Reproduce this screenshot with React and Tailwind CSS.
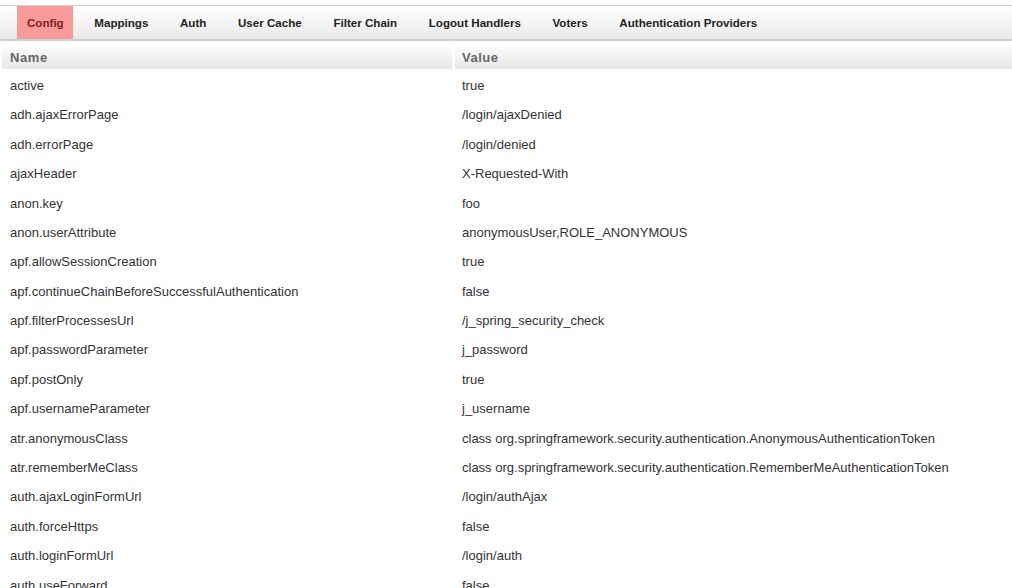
const tabs = [
  'Config',
  'Mappings',
  'Auth',
  'User Cache',
  'Filter Chain',
  'Logout Handlers',
  'Voters',
  'Authentication Providers',
];

const rows = [
  ['active', 'true'],
  ['adh.ajaxErrorPage', '/login/ajaxDenied'],
  ['adh.errorPage', '/login/denied'],
  ['ajaxHeader', 'X-Requested-With'],
  ['anon.key', 'foo'],
  ['anon.userAttribute', 'anonymousUser,ROLE_ANONYMOUS'],
  ['apf.allowSessionCreation', 'true'],
  ['apf.continueChainBeforeSuccessfulAuthentication', 'false'],
  ['apf.filterProcessesUrl', '/j_spring_security_check'],
  ['apf.passwordParameter', 'j_password'],
  ['apf.postOnly', 'true'],
  ['apf.usernameParameter', 'j_username'],
  ['atr.anonymousClass', 'class org.springframework.security.authentication.AnonymousAuthenticationToken'],
  ['atr.rememberMeClass', 'class org.springframework.security.authentication.RememberMeAuthenticationToken'],
  ['auth.ajaxLoginFormUrl', '/login/authAjax'],
  ['auth.forceHttps', 'false'],
  ['auth.loginFormUrl', '/login/auth'],
  ['auth.useForward', 'false'],
  ['dao.hideUserNotFoundExceptions', 'true'],
];

export default function App() {
  return (
    <div className="h-[588px] overflow-hidden bg-white font-['Liberation_Sans',Arial,sans-serif] text-[#333]">
      <div className="h-[5px]" />
      <nav className="flex h-[36px] items-stretch gap-[11.6px] border-t border-b-2 border-[#cfcfcf] bg-gradient-to-b from-white to-[#e9e9e9] pl-[17px]">
        {tabs.map((t, i) => (
          <div
            key={t}
            className={
              i === 0
                ? 'flex items-center bg-[#f79a9a] pl-[10px] pr-[9px] pt-[1px] text-[11.6px] font-bold text-[#8a1c1c]'
                : 'flex items-center px-[10px] pt-[1px] text-[11.6px] font-bold text-[#222]'
            }
          >
            {t}
          </div>
        ))}
      </nav>

      <div className="mt-[6px] flex gap-[3px] pl-[2px]">
        <div className="flex h-[22px] w-[450px] items-center bg-gradient-to-b from-[#fbfbfb] to-[#e7e7e7] pl-[8px] text-[13px] font-bold tracking-[0.6px] text-[#666]">
          Name
        </div>
        <div className="flex h-[22px] flex-1 items-center bg-gradient-to-b from-[#fbfbfb] to-[#e7e7e7] pl-[7px] text-[13px] font-bold tracking-[0.5px] text-[#666]">
          Value
        </div>
      </div>

      <div className="mt-[2px]">
        {rows.map(([k, v]) => (
          <div key={k} className="flex h-[29.4px] items-center gap-[3px] pl-[2px] text-[13px]">
            <div className="w-[450px] pl-[8px]">{k}</div>
            <div className="flex-1 pl-[7px]">{v}</div>
          </div>
        ))}
      </div>
    </div>
  );
}
